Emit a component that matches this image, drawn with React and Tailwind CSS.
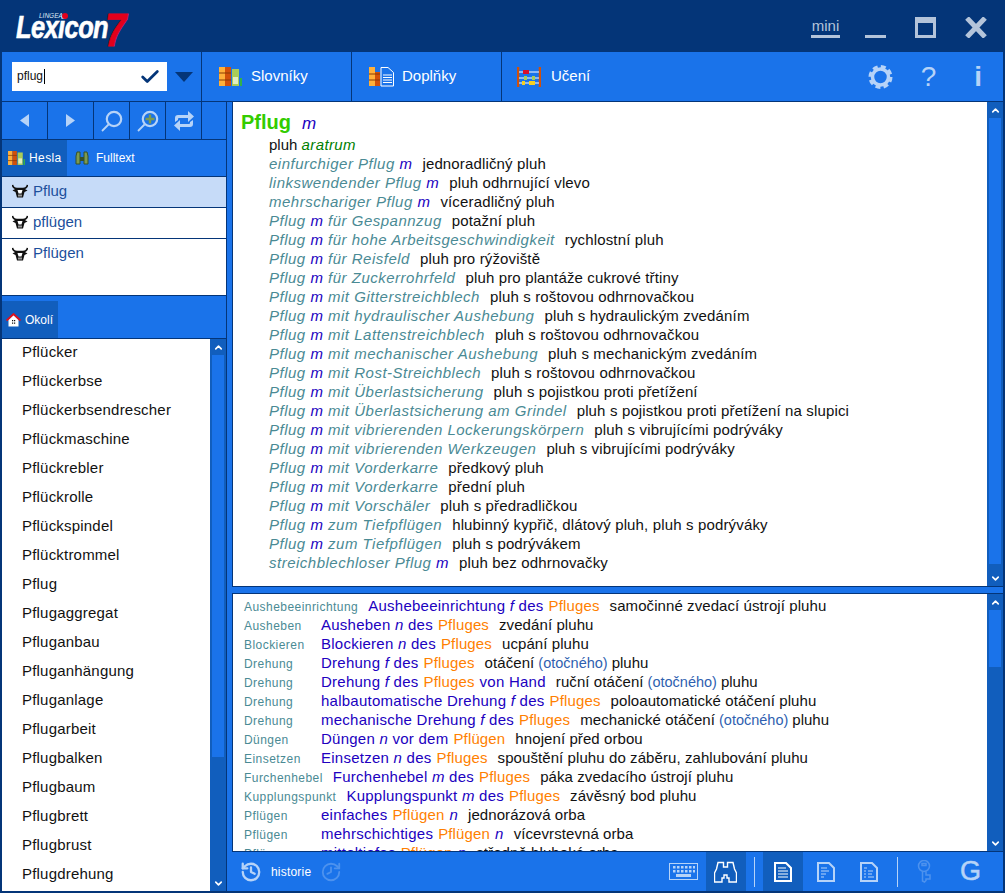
import { Check, ChevronUp, ChevronDown, History } from 'lucide-react';

const font = { fontFamily: '"Liberation Sans", Arial, sans-serif' };

const entries = [
  ['einfurchiger Pflug', 'm', '', 'jednoradličný pluh'],
  ['linkswendender Pflug', 'm', '', 'pluh odhrnující vlevo'],
  ['mehrschariger Pflug', 'm', '', 'víceradličný pluh'],
  ['Pflug', 'm', 'für Gespannzug', 'potažní pluh'],
  ['Pflug', 'm', 'für hohe Arbeitsgeschwindigkeit', 'rychlostní pluh'],
  ['Pflug', 'm', 'für Reisfeld', 'pluh pro rýžoviště'],
  ['Pflug', 'm', 'für Zuckerrohrfeld', 'pluh pro plantáže cukrové třtiny'],
  ['Pflug', 'm', 'mit Gitterstreichblech', 'pluh s roštovou odhrnovačkou'],
  ['Pflug', 'm', 'mit hydraulischer Aushebung', 'pluh s hydraulickým zvedáním'],
  ['Pflug', 'm', 'mit Lattenstreichblech', 'pluh s roštovou odhrnovačkou'],
  ['Pflug', 'm', 'mit mechanischer Aushebung', 'pluh s mechanickým zvedáním'],
  ['Pflug', 'm', 'mit Rost-Streichblech', 'pluh s roštovou odhrnovačkou'],
  ['Pflug', 'm', 'mit Überlastsicherung', 'pluh s pojistkou proti přetížení'],
  ['Pflug', 'm', 'mit Überlastsicherung am Grindel', 'pluh s pojistkou proti přetížení na slupici'],
  ['Pflug', 'm', 'mit vibrierenden Lockerungskörpern', 'pluh s vibrujícími podrýváky'],
  ['Pflug', 'm', 'mit vibrierenden Werkzeugen', 'pluh s vibrujícími podrýváky'],
  ['Pflug', 'm', 'mit Vorderkarre', 'předkový pluh'],
  ['Pflug', 'm', 'mit Vorderkarre', 'přední pluh'],
  ['Pflug', 'm', 'mit Vorschäler', 'pluh s předradličkou'],
  ['Pflug', 'm', 'zum Tiefpflügen', 'hlubinný kypřič, dlátový pluh, pluh s podrýváky'],
  ['Pflug', 'm', 'zum Tiefpflügen', 'pluh s podrývákem'],
  ['streichblechloser Pflug', 'm', '', 'pluh bez odhrnovačky'],
];

const related = [
  ['Aushebeeinrichtung', 'Aushebeeinrichtung', 'f', 'des', 'Pfluges', '', 'samočinné zvedací ústrojí pluhu'],
  ['Ausheben', 'Ausheben', 'n', 'des', 'Pfluges', '', 'zvedání pluhu'],
  ['Blockieren', 'Blockieren', 'n', 'des', 'Pfluges', '', 'ucpání pluhu'],
  ['Drehung', 'Drehung', 'f', 'des', 'Pfluges', '', 'otáčení', '(otočného)', 'pluhu'],
  ['Drehung', 'Drehung', 'f', 'des', 'Pfluges', 'von Hand', 'ruční otáčení', '(otočného)', 'pluhu'],
  ['Drehung', 'halbautomatische Drehung', 'f', 'des', 'Pfluges', '', 'poloautomatické otáčení pluhu'],
  ['Drehung', 'mechanische Drehung', 'f', 'des', 'Pfluges', '', 'mechanické otáčení', '(otočného)', 'pluhu'],
  ['Düngen', 'Düngen', 'n', 'vor dem', 'Pflügen', '', 'hnojení před orbou'],
  ['Einsetzen', 'Einsetzen', 'n', 'des', 'Pfluges', '', 'spouštění pluhu do záběru, zahlubování pluhu'],
  ['Furchenhebel', 'Furchenhebel', 'm', 'des', 'Pfluges', '', 'páka zvedacího ústrojí pluhu'],
  ['Kupplungspunkt', 'Kupplungspunkt', 'm', 'des', 'Pfluges', '', 'závěsný bod pluhu'],
  ['Pflügen', 'einfaches', '', '', 'Pflügen', 'n', 'jednorázová orba'],
  ['Pflügen', 'mehrschichtiges', '', '', 'Pflügen', 'n', 'vícevrstevná orba'],
  ['Pflügen', 'mitteltiefes', '', '', 'Pflügen', 'n', 'středně hluboká orba'],
];

const nearby = [
  'Pflücker', 'Pflückerbse', 'Pflückerbsendrescher', 'Pflückmaschine', 'Pflückrebler', 'Pflückrolle',
  'Pflückspindel', 'Pflücktrommel', 'Pflug', 'Pflugaggregat', 'Pfluganbau', 'Pfluganhängung',
  'Pfluganlage', 'Pflugarbeit', 'Pflugbalken', 'Pflugbaum', 'Pflugbrett', 'Pflugbrust', 'Pflugdrehung',
];

const BooksIcon = ({ small }) => (
  <svg width={small ? 17 : 23} height={small ? 14 : 19} viewBox="0 0 23 19" className="shrink-0">
    <rect x="0" y="0" width="6" height="19" fill="#ffb03a" />
    <rect x="6" y="0" width="6" height="19" fill="#d2500a" />
    <path d="M0 6h12M0 13h12" stroke="#8a3a05" strokeWidth="1" />
    <rect x="13" y="2" width="7" height="17" fill="#a9cc58" />
    <rect x="14" y="10" width="5" height="7" fill="#e2ecc0" />
    <rect x="21" y="11" width="2" height="8" fill="#33b04a" />
  </svg>
);

const AddonIcon = () => (
  <svg width="25" height="20" viewBox="0 0 25 20" className="shrink-0">
    <rect x="0" y="0" width="6" height="19" fill="#ffb03a" />
    <rect x="6" y="5" width="5" height="14" fill="#d2500a" />
    <path d="M0 7h11M0 13h11" stroke="#8a3a05" strokeWidth="1" />
    <path d="M12 .5h7l5.500 5V19H12Z" fill="#1a73ea" stroke="#fff" />
    <path d="M14 8h9M14 10.500h9M14 13h9M14 15.500h9" stroke="#fff" />
  </svg>
);

const AbacusIcon = () => (
  <svg width="24" height="20" viewBox="0 0 24 20" className="shrink-0">
    <path d="M1 0v20M23 0v20" stroke="#d2500a" strokeWidth="2.500" />
    <path d="M2 5h20M2 11h20M2 16h20" stroke="#fff" />
    <rect x="6" y="3" width="6" height="4" fill="#d8102a" />
    <rect x="7" y="9" width="3" height="4" fill="#a9cc58" />
    <rect x="15" y="9" width="3" height="4" fill="#a9cc58" />
    <rect x="5" y="14" width="3" height="4" fill="#f5d020" />
    <rect x="12" y="14" width="6" height="4" fill="#f5d020" />
  </svg>
);

const BinocularsIcon = () => (
  <svg width="14" height="14" viewBox="0 0 14 14" className="shrink-0">
    <path d="M1 13V5l1-4h3v12ZM13 13V5l-1-4H9v12Z" fill="#7d9a50" stroke="#35502a" />
    <path d="M5 6h4v4H5Z" fill="#35502a" />
  </svg>
);

const OxIcon = () => (
  <svg width="16" height="14" viewBox="0 0 16 14" className="shrink-0">
    <path d="M.5 1c.5 2.500 2 3.500 4.500 3.500h6c2.500 0 4-1 4.500-3.500" fill="none" stroke="#111" strokeWidth="1.600" />
    <path d="M.5 6.500 4 4.500h8l3.500 2-3 1.500-1.500 5.500H5L3.500 8Z" fill="#111" />
    <path d="M5.500 6h5L9.500 9.500h-3Z" fill="#fff" />
    <rect x="6" y="10.500" width="4" height="2" fill="#999" />
  </svg>
);

const HomeIcon = () => (
  <svg width="15" height="14" viewBox="0 0 15 14" className="shrink-0">
    <path d="M2.500 7V13.500H12.500V7L7.500 2Z" fill="#fff" />
    <path d="M.5 7.500 7.500 1l7 6.500" fill="none" stroke="#e0101c" strokeWidth="1.800" />
    <path d="M6 7h1.200v1.200H6ZM8 7h1.200v1.200H8ZM6 9.500h1.200v1.200H6ZM8 9.500h1.200v1.200H8Z" fill="#111" />
  </svg>
);

const Triangle = ({ dir }) => (
  <svg width="10" height="14" viewBox="0 0 10 14">
    <path d={dir === 'left' ? 'M9 0v13L0 6.500Z' : 'M0 0v13l9-6.500Z'} fill="#b6d3f8" />
  </svg>
);

const Magnifier = ({ plus }) => (
  <svg width="22" height="22" viewBox="0 0 22 22" fill="none">
    <circle cx="13" cy="9" r="7.200" stroke="#b6d3f8" strokeWidth="2.200" />
    <path d="M7.500 14.500 1 21" stroke="#b6d3f8" strokeWidth="1.800" />
    {plus && <path d="M13 4.500v9M8.500 9h9" stroke="#7d9a50" strokeWidth="2.400" />}
  </svg>
);

const SwapIcon = () => (
  <svg width="20" height="20" viewBox="0 0 20 20" fill="#b6d3f8">
    <path d="M1 11V7q0-3 3-3h10V0l6 5.500L14 11V7H5q-1 0-1 1v1Z" />
    <path d="M19 9v4q0 3-3 3H6v4l-6-5.500L6 9v4h9q1 0 1-1v-1Z" />
  </svg>
);

const GearIcon = () => (
  <svg width="25" height="24" viewBox="0 0 25 24" fill="none" stroke="#b6d3f8">
    <circle cx="12.500" cy="12" r="8" strokeWidth="3.500" />
    <circle cx="12.500" cy="12" r="10.500" strokeWidth="3" strokeDasharray="5 3.250" />
  </svg>
);

const DocIcon = ({ variant }) => (
  <svg width="18" height="20" viewBox="0 0 18 20" fill="none">
    <path d="M1 1h11l5 5v13H1Z" stroke={variant === 'active' ? '#fff' : '#b6d3f8'} strokeWidth="2" />
    {variant === 'active' && <path d="M4 6h8M4 9h10M4 12h10M4 15h10" stroke="#fff" strokeWidth="1.200" />}
    {variant === 'lines' && <path d="M4 6h6M4 9h8M4 12h5M4 15h3" stroke="#b6d3f8" strokeWidth="1.200" />}
    {variant === 'dots' && (
      <path d="M4 6h3M4 9h2M8 9h5M4 12h2M8 12h4M4 15h2M8 15h6" stroke="#b6d3f8" strokeWidth="1.200" />
    )}
  </svg>
);

const KeyboardIcon = () => (
  <svg width="29" height="17" viewBox="0 0 29 17" fill="none">
    <rect x="0.500" y="0.500" width="28" height="16" stroke="#b6d3f8" />
    <path
      d="M4 3h2.500v2.500H4ZM8 3h2.500v2.500H8ZM12 3h2.500v2.500H12ZM16 3h2.500v2.500H16ZM20 3h2.500v2.500H20ZM24 3h2v2.500h-2ZM4 7h2.500v2.500H4ZM8 7h2.500v2.500H8ZM12 7h2.500v2.500H12ZM16 7h2.500v2.500H16ZM20 7h2.500v2.500H20ZM24 7h2v2.500h-2ZM7 11h15v3H7Z"
      fill="#b6d3f8"
    />
  </svg>
);

const BigBinoculars = () => (
  <svg width="23" height="22" viewBox="0 0 23 22" fill="none">
    <path
      d="M2.500 8 4 1.500h5.500V6h4V1.500H19L20.500 8l2 4v9h-7.500v-4h-2v-3h-3v3H8v4H.5v-9Z"
      stroke="#fff"
      strokeWidth="1.400"
    />
  </svg>
);

const KeyIcon = () => (
  <svg width="15" height="23" viewBox="0 0 15 23" fill="none" stroke="#4d92ee" strokeWidth="1.500">
    <circle cx="7" cy="6" r="5.500" />
    <rect x="5" y="3.500" width="4" height="2" />
    <path d="M5.500 11.500V21L7.500 22l1.500-1.500V19h4v-4H9v-3.500" />
  </svg>
);

const ScrollBar = ({ thumbHeight }) => (
  <div className="w-4 shrink-0 flex flex-col bg-[#115ebd]">
    <div className="h-4 flex items-center justify-center text-white">
      <ChevronUp size={11} strokeWidth={3.500} />
    </div>
    <div className="flex-1 px-[2px]">
      <div className="bg-[#1a73ea] w-full" style={{ height: thumbHeight }} />
    </div>
    <div className="h-4 flex items-center justify-center text-white">
      <ChevronDown size={11} strokeWidth={3.500} />
    </div>
  </div>
);

const NavCell = ({ width, children }) => (
  <div className={`${width} h-full flex items-center justify-center border-r border-[#043578]`}>{children}</div>
);

export default function App() {
  return (
    <div className="w-[1005px] h-[893px] overflow-hidden flex flex-col bg-[#1a73ea] border-x-2 border-b-2 border-[#043578]" style={font}>
      {/* title bar */}
      <div className="h-[52px] shrink-0 -mx-[2px] bg-[#043578] flex items-center">
        <div className="relative ml-[16px] w-[112px] h-[34px] mt-[6px] select-none">
          <span className="block mt-[6px] origin-left scale-x-[.82] text-white font-bold italic text-[31px] tracking-[-.7px] leading-[19px] [-webkit-text-stroke:0.6px_white]">
            Lexicon
          </span>
          <span className="absolute left-[23px] top-[1px] text-[6.500px] leading-[5px] italic text-[#dfe8f5]">LINGEA</span>
          <span className="absolute left-[46px] top-[1px] w-[6px] h-[6px] rounded-full bg-[#e3001b]" />
          <span className="absolute left-[89px] -top-[6px] origin-left scale-x-[.82] text-[#e3001b] font-bold italic text-[47px] leading-[47px] [-webkit-text-stroke:0.8px_#e3001b]">7</span>
        </div>
        <div className="ml-auto flex items-start text-[#b4c4da] mr-[18px] h-[22px] mt-[5px]">
          <span className="text-[15px] w-[29px] text-center border-b-[3px] border-[#b4c4da] leading-[18px] -mt-[1px]">mini</span>
          <div className="w-[21px] h-[3px] bg-[#b4c4da] ml-[25px] mt-[17px]" />
          <div className="w-[21px] h-[21px] border-[3px] border-t-[6px] border-[#b4c4da] ml-[29px] -mt-[1px]" />
          <svg width="22" height="21" viewBox="0 0 22 21" className="ml-[29px] -mt-[1px]">
            <path d="M2 1 20 20M20 1 2 20" stroke="#b4c4da" strokeWidth="5" />
          </svg>
        </div>
      </div>

      {/* menu bar */}
      <div className="h-[50px] shrink-0 flex items-center border-b border-[#043578]">
        <div className="w-[200px] h-full flex items-center border-r border-[#043578] pl-[10px]">
          <div className="w-[155px] h-[29px] bg-white flex items-center px-[5px]">
            <span className="text-[12px] text-[#111] border-r border-black leading-[15px] pr-[1px]">pflug</span>
            <Check size={22} strokeWidth={3} className="ml-auto mr-[1px] text-[#043578]" />
          </div>
          <svg width="18" height="10" viewBox="0 0 18 10" className="ml-[8px]">
            <path d="M0 0h18L9 10Z" fill="#043578" />
          </svg>
        </div>
        <div className="w-[150px] h-full flex items-center border-r border-[#043578] pl-[17px] gap-[9px] text-[15px] text-white">
          <BooksIcon />
          <span>Slovníky</span>
        </div>
        <div className="w-[150px] h-full flex items-center border-r border-[#043578] pl-[17px] gap-[8px] text-[15px] text-white">
          <AddonIcon />
          <span>Doplňky</span>
        </div>
        <div className="flex items-center pl-[15px] gap-[10px] text-[15px] text-white">
          <AbacusIcon />
          <span>Učení</span>
        </div>
        <div className="ml-auto flex items-center text-[#b6d3f8]">
          <GearIcon />
          <span className="text-[28px] ml-[28px] leading-none">?</span>
          <span className="text-[28px] ml-[38px] mr-[21px] leading-none font-bold">i</span>
        </div>
      </div>

      <div className="flex-1 flex min-h-0">
        {/* left column */}
        <div className="w-[225px] shrink-0 flex flex-col border-r border-[#043578]">
          <div className="h-[38px] shrink-0 flex items-center border-b border-[#043578]">
            <NavCell width="w-[46px]"><Triangle dir="left" /></NavCell>
            <NavCell width="w-[46px]"><Triangle dir="right" /></NavCell>
            <NavCell width="w-[36px]"><Magnifier /></NavCell>
            <NavCell width="w-[36px]"><Magnifier plus /></NavCell>
            <NavCell width="w-[36px]"><SwapIcon /></NavCell>
          </div>
          <div className="h-[37px] shrink-0 flex items-stretch border-b border-[#043578] text-[12px] text-white">
            <div className="w-[65px] bg-[#115ebd] flex items-center pl-[6px] gap-[4px]">
              <BooksIcon small />
              <span className="tracking-[.4px]">Hesla</span>
            </div>
            <div className="flex items-center pl-[8px] gap-[7px]">
              <BinocularsIcon />
              <span>Fulltext</span>
            </div>
          </div>
          <div className="h-[119px] shrink-0 bg-white flex flex-col border-b border-[#043578] text-[15px] text-[#1c4f9c]">
            <div className="h-[31px] shrink-0 bg-[#c6dbf8] border-b border-[#043578] flex items-center pl-[10px] pb-[2px] gap-[5px]">
              <OxIcon />
              <span>Pflug</span>
            </div>
            <div className="h-[31px] shrink-0 border-b border-[#043578] flex items-center pl-[10px] pb-[2px] gap-[5px]">
              <OxIcon />
              <span>pflügen</span>
            </div>
            <div className="h-[31px] shrink-0 flex items-center pl-[10px] pb-[2px] gap-[5px]">
              <OxIcon />
              <span>Pflügen</span>
            </div>
          </div>
          <div className="h-[43px] shrink-0 flex items-end border-b border-[#043578] text-[12px] text-white">
            <div className="w-[56px] h-[37px] bg-[#115ebd] flex items-center pl-[4px] gap-[4px]">
              <HomeIcon />
              <span>Okolí</span>
            </div>
          </div>
          <div className="flex-1 min-h-0 flex">
            <div className="flex-1 bg-white overflow-hidden pl-[20px] text-[15px] tracking-[.2px] text-[#111]">
              <div className="-mt-[2px]">
                {nearby.map((word, i) => (
                  <div key={i} className="h-[29px] leading-[29px]">{word}</div>
                ))}
              </div>
            </div>
            <ScrollBar thumbHeight={402} />
          </div>
        </div>

        {/* right column */}
        <div className="flex-1 min-w-0 flex flex-col pl-[5px]">
          <div className="h-[485px] shrink-0 flex border-b border-l border-[#043578]">
            <div className="flex-1 min-w-0 bg-white pl-[8px] pt-[5px] overflow-hidden">
              <div className="h-[28px] flex items-baseline gap-[11px]">
                <span className="text-[20px] font-bold text-[#33cc00]">Pflug</span>
                <span className="text-[17px] italic text-[#2000c0]">m</span>
              </div>
              <div className="pl-[28px] text-[15px] leading-[19px] whitespace-nowrap">
                <div>
                  <span className="text-[#111]">pluh </span>
                  <span className="italic text-[#008000] tracking-[.4px]">aratrum</span>
                </div>
                {entries.map((row, i) => (
                  <div key={i}>
                    <span className="italic tracking-[.5px] text-[#4a8a94]">{row[0]} </span>
                    <span className="italic tracking-[.5px] text-[#2000c0]">{row[1]}</span>
                    {row[2] && <span className="italic tracking-[.5px] text-[#4a8a94]"> {row[2]}</span>}
                    <span className="text-[#111] ml-[10px] tracking-[.15px]">{row[3]}</span>
                  </div>
                ))}
              </div>
            </div>
            <ScrollBar thumbHeight={446} />
          </div>
          <div className="h-[6px] shrink-0" />
          <div className="h-[259px] shrink-0 flex border-y border-l border-[#043578]">
            <div className="flex-1 min-w-0 bg-white pl-[11px] pt-[2px] overflow-hidden">
              {related.map((row, i) => (
                <div key={i} className="h-[19px] flex items-baseline whitespace-nowrap text-[15px] leading-[19px]">
                  <span className="text-[12px] tracking-[.45px] text-[#4a8a94] min-w-[67px] mr-[10px]">{row[0]}</span>
                  <span className="text-[#2000c0] tracking-[.25px]">
                    {row[1]}
                    {row[2] && <i> {row[2]}</i>}
                    {row[3] && ` ${row[3]}`}
                  </span>
                  <span className="text-[#ff8000] ml-[5px] tracking-[.15px]">{row[4]}</span>
                  {row[5] && <span className="text-[#2000c0] ml-[5px] tracking-[.25px]">{row[5] === 'n' ? <i>n</i> : row[5]}</span>}
                  <span className="text-[#111] ml-[10px] tracking-[.08px]">{row[6]}</span>
                  {row[7] && <span className="text-[14.500px] text-[#2f5fb0] ml-[4px]">{row[7]}</span>}
                  {row[8] && <span className="text-[#111] ml-[4px]">{row[8]}</span>}
                </div>
              ))}
            </div>
            <ScrollBar thumbHeight={57} />
          </div>

          {/* bottom bar */}
          <div className="flex-1 min-h-0 flex items-center text-[#b6d3f8]">
            <History size={22} strokeWidth={2.500} className="ml-[8px]" />
            <span className="text-[12px] ml-[9px] text-white tracking-[.2px]">historie</span>
            <History size={22} strokeWidth={2} className="ml-[9px] text-[#4d92ee] -scale-x-100" />
            <div className="ml-auto flex items-center h-full">
              <KeyboardIcon />
              <div className="w-[40px] h-full bg-[#115ebd] ml-[8px] flex items-center justify-center"><BigBinoculars /></div>
              <div className="w-px h-[30px] bg-[#b6d3f8] ml-[8px]" />
              <div className="w-[40px] h-full bg-[#115ebd] ml-[8px] flex items-center justify-center"><DocIcon variant="active" /></div>
              <div className="w-[43px] h-full flex items-center justify-center ml-[2px]"><DocIcon variant="lines" /></div>
              <div className="w-[43px] h-full flex items-center justify-center"><DocIcon variant="dots" /></div>
              <div className="w-px h-[30px] bg-[#b6d3f8] ml-[6px]" />
              <div className="ml-[19px]"><KeyIcon /></div>
              <span className="text-[27px] ml-[28px] mr-[22px] leading-none [-webkit-text-stroke:0.5px_#b6d3f8]">G</span>
            </div>
          </div>
        </div>
      </div>
    </div>
  );
}
